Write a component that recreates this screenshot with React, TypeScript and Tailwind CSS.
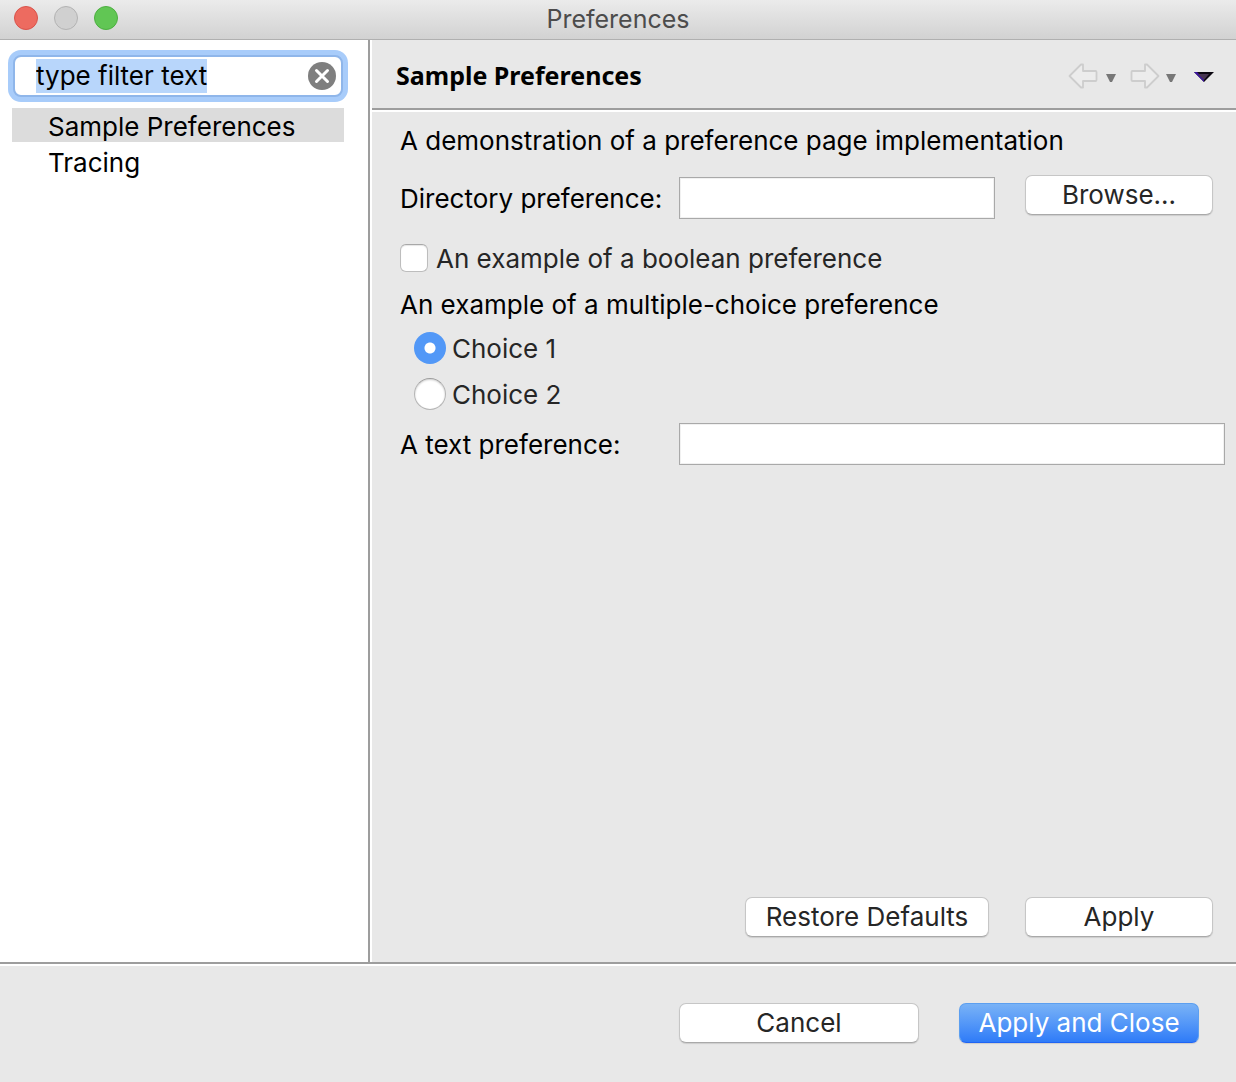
import { useEffect, useRef, useState } from 'react'
import type { ButtonHTMLAttributes } from 'react'

const pushButton =
  'h-10 rounded-[7px] border border-[#c6c6c6] border-b-[#a9a9a9] bg-white text-[#262626] shadow-[0_1px_1px_rgba(0,0,0,0.12)]'
const defaultButton =
  'h-10 rounded-[7px] border border-[#5c9ff0] border-b-[#1f64f4] bg-linear-to-b from-[#79b2f6] to-[#2e7bf8] text-white shadow-[0_1px_1px_rgba(0,0,0,0.12)]'
const textField =
  'h-[42px] w-full min-w-0 border border-[#a9a9a9] bg-white px-2 text-black shadow-[inset_0_0_0_1px_#f1f1f1] outline-none'
const radio =
  'size-8 shrink-0 appearance-none rounded-full border border-[#b5b5b5] border-t-[#9c9c9c] bg-white shadow-[inset_0_1px_2px_rgba(0,0,0,0.2)] checked:border-0 checked:bg-[radial-gradient(circle,#fff_5px,#5298f7_6px)] checked:shadow-none'

function Button({
  primary = false,
  className = '',
  ...rest
}: ButtonHTMLAttributes<HTMLButtonElement> & { primary?: boolean }) {
  return <button type="button" className={`${primary ? defaultButton : pushButton} ${className}`} {...rest} />
}

function BackArrow({ className = '' }: { className?: string }) {
  return (
    <svg viewBox="0 0 30 26" className={`h-[26px] w-[30px] ${className}`} aria-hidden="true">
      <path
        d="M1.500 13 13 1.500h2V8h12.500q1 0 1 1v8q0 1-1 1H15v6.500h-2Z"
        fill="#ececec"
        stroke="#cdcdcd"
        strokeWidth="1.8"
        strokeLinejoin="round"
      />
    </svg>
  )
}

function Caret() {
  return (
    <svg viewBox="0 0 10 8" className="h-2 w-2.5" aria-hidden="true">
      <path d="M0 0h10L6 8H4Z" fill="#777" />
    </svg>
  )
}

function HistoryControls() {
  return (
    <div className="flex items-center">
      <button type="button" aria-label="Back">
        <BackArrow />
      </button>
      <button type="button" aria-label="Back history" className="ml-2 pt-1">
        <Caret />
      </button>
      <button type="button" aria-label="Forward" className="ml-3.5">
        <BackArrow className="-scale-x-100" />
      </button>
      <button type="button" aria-label="Forward history" className="ml-1.5 pt-1">
        <Caret />
      </button>
      <button type="button" aria-label="View menu" className="ml-[18px] pt-0.5">
        <svg viewBox="0 0 20 10" className="h-2.5 w-5" aria-hidden="true">
          <path d="M0 0h20L10 10Z" fill="#0b0710" />
          <path d="M0 0 10 10v-3L3 0Z" fill="#3a12a0" />
          <path d="M4 2h11l-5 6Z" fill="#46344f" />
        </svg>
      </button>
    </div>
  )
}

function Sidebar() {
  const [filter, setFilter] = useState('type filter text')
  const [page, setPage] = useState('Sample Preferences')
  const field = useRef<HTMLInputElement>(null)

  useEffect(() => {
    field.current?.focus()
    field.current?.select()
  }, [])

  return (
    <aside className="w-[370px] shrink-0 border-r-2 border-[#9d9d9d] bg-white pt-[15px] pr-6 pl-3">
      <div className="mx-px flex h-[42px] items-center rounded-[8px] border-2 border-[#8fb6ea] bg-white pr-[5px] pl-[21px] shadow-[0_0_0_5px_#a8ccfa]">
        <input
          ref={field}
          aria-label="Filter"
          value={filter}
          onChange={(e) => setFilter(e.target.value)}
          className="h-[34px] w-full min-w-0 leading-[34px] outline-none selection:bg-[#b8d6fb] selection:text-black"
        />
        <button type="button" aria-label="Clear filter" className="shrink-0" onClick={() => setFilter('')}>
          <svg viewBox="0 0 28 28" className="size-7" aria-hidden="true">
            <circle cx="14" cy="14" r="14" fill="#7f7f7f" />
            <path d="m8.500 8.500 11 11m0-11-11 11" stroke="#fff" strokeWidth="3" strokeLinecap="round" />
          </svg>
        </button>
      </div>
      <nav className="mt-[11px] flex flex-col gap-0.5">
        {['Sample Preferences', 'Tracing'].map((name) => (
          <button
            key={name}
            type="button"
            onClick={() => setPage(name)}
            className={`h-[34px] pt-1 pl-9 text-left leading-[30px] ${page === name ? 'bg-[#dcdcdc]' : ''}`}
          >
            {name}
          </button>
        ))}
      </nav>
    </aside>
  )
}

export default function App() {
  const [choice, setChoice] = useState('1')

  return (
    <div className="flex min-h-screen flex-col bg-[#e8e8e8] font-['Inter',sans-serif] text-[26px] leading-8 text-black">
      <header className="relative flex h-10 shrink-0 items-center justify-center border-b border-[#b0b0b0] bg-linear-to-b from-[#ebebeb] to-[#d2d2d2] pb-0.5">
        <div className="absolute top-1.5 left-3.5 flex gap-4">
          <button type="button" aria-label="Close" className="size-6 rounded-full border border-[#d9534b] bg-[#ed6b60]" />
          <button type="button" aria-label="Minimize" className="size-6 rounded-full border border-[#b3b3b3] bg-[#d0d0d0]" />
          <button type="button" aria-label="Zoom" className="size-6 rounded-full border border-[#4caf40] bg-[#61c654]" />
        </div>
        <h1 className="text-[25px] text-[#4c4c4c]">Preferences</h1>
      </header>

      <div className="flex flex-1">
        <Sidebar />
        <main className="flex min-w-0 flex-1 flex-col border-l-2 border-white">
          <div className="flex h-[70px] items-center justify-between border-b-2 border-[#9d9d9d] pt-1 pr-[22px] pl-6">
            <h2 className="pb-0.5 font-['Noto_Sans',sans-serif] text-[25px] font-bold">Sample Preferences</h2>
            <HistoryControls />
          </div>

          <form className="flex flex-1 flex-col border-t-2 border-white pt-[13px] pr-[11px] pb-[25px] pl-7">
            <p>A demonstration of a preference page implementation</p>

            <div className="mt-[18px] flex items-center">
              <label htmlFor="directory" className="w-[279px] shrink-0 pt-0.5">
                Directory preference:
              </label>
              <input id="directory" className={textField} />
              <Button className="mr-3 mb-1.5 ml-[30px] w-[188px] shrink-0">Browse...</Button>
            </div>

            <div className="mt-[22px] flex items-center">
              <input
                id="boolean"
                type="checkbox"
                className="mb-0.5 size-7 shrink-0 appearance-none rounded-[6px] border border-[#bdbdbd] border-t-[#a8a8a8] bg-white shadow-[inset_0_1px_1px_rgba(0,0,0,0.1)] checked:bg-[#5298f7]"
              />
              <label htmlFor="boolean" className="pl-2 text-[#262626]">
                An example of a boolean preference
              </label>
            </div>

            <fieldset className="mt-3.5">
              <legend>An example of a multiple-choice preference</legend>
              <div className="mt-2.5 flex flex-col gap-3">
                {['1', '2'].map((n) => (
                  <div key={n} className="flex items-center pl-3.5">
                    <input
                      id={`choice-${n}`}
                      type="radio"
                      name="choice"
                      checked={choice === n}
                      onChange={() => setChoice(n)}
                      className={radio}
                    />
                    <label htmlFor={`choice-${n}`} className="pt-0.5 pl-1.5 text-[#262626]">
                      Choice {n}
                    </label>
                  </div>
                ))}
              </div>
            </fieldset>

            <div className="mt-3 flex items-center">
              <label htmlFor="text" className="w-[279px] shrink-0 pt-0.5">
                A text preference:
              </label>
              <input id="text" className={textField} />
            </div>

            <div className="mt-auto flex justify-end gap-9 pr-3">
              <Button className="w-[244px]">Restore Defaults</Button>
              <Button className="w-[188px]">Apply</Button>
            </div>
          </form>
        </main>
      </div>

      <footer className="border-t-2 border-[#9d9d9d]">
        <div className="flex justify-end gap-10 border-t-2 border-white pt-[37px] pr-[37px] pb-[39px]">
          <Button className="w-60">Cancel</Button>
          <Button primary className="w-60">
            Apply and Close
          </Button>
        </div>
      </footer>
    </div>
  )
}
